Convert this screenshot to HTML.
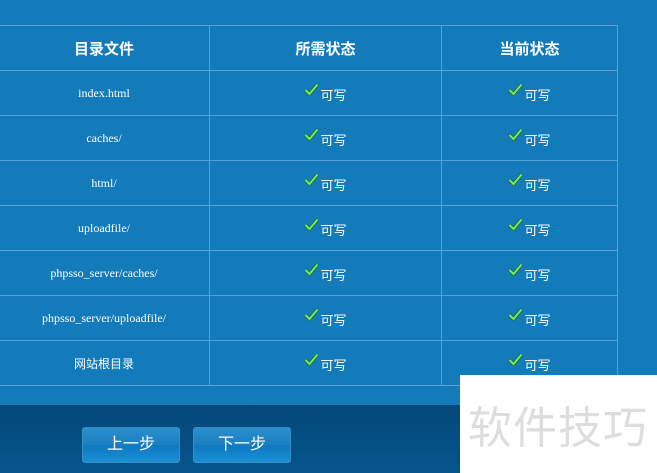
<!DOCTYPE html>
<html><head><meta charset="utf-8"><style>
*{margin:0;padding:0;box-sizing:border-box}
body{width:657px;height:473px;overflow:hidden;background:#147bbb;position:relative;font-family:"Liberation Serif","Noto Sans CJK SC",serif;color:#fff}
table{position:absolute;left:-2px;top:25px;border-collapse:collapse;width:619px;table-layout:fixed}
td{border:1px solid #5aa2d6;height:45px;text-align:center;font-size:12px}
tr.h td{font-size:15px;font-weight:bold;font-family:"Liberation Sans","Noto Sans CJK SC",sans-serif}
td.c{font-family:"Liberation Sans","Noto Sans CJK SC",sans-serif;font-size:13px}
.ck{display:inline-block;vertical-align:4px;margin-right:1px}
.bot{position:absolute;left:0;top:405px;width:657px;height:68px;background:linear-gradient(#04487a,#05558c)}
.btn{position:absolute;top:427px;width:98px;height:36px;border:1px solid #3a8cc4;border-radius:3px;background:linear-gradient(#2a8fcf 0%,#1c7fbf 50%,#0e78c0 52%,#1a90d6 100%);color:#fff;font-size:16px;text-align:center;line-height:34px;font-family:"Liberation Sans","Noto Sans CJK SC",sans-serif}
.wm{position:absolute;left:460px;top:375px;width:197px;height:98px;background:#fff;color:#ddd;font-size:44px;line-height:98px;padding-left:8px;font-family:"Noto Sans CJK SC",sans-serif;letter-spacing:1px}
</style></head><body>
<table>
<colgroup><col style="width:211px"><col style="width:232px"><col style="width:176px"></colgroup>
<tr class="h"><td>目录文件</td><td>所需状态</td><td>当前状态</td></tr>
<tr><td>index.html</td><td class="c"><svg class="ck" width="15" height="13" viewBox="0 0 15 13"><path d="M1.5 7l4 4 8-9.5" stroke="#1e6b1e" stroke-width="3.6" fill="none"/><path d="M1.5 7l4 4 8-9.5" stroke="#72e872" stroke-width="2" fill="none"/></svg>可写</td><td class="c"><svg class="ck" width="15" height="13" viewBox="0 0 15 13"><path d="M1.5 7l4 4 8-9.5" stroke="#1e6b1e" stroke-width="3.6" fill="none"/><path d="M1.5 7l4 4 8-9.5" stroke="#72e872" stroke-width="2" fill="none"/></svg>可写</td></tr>
<tr><td>caches/</td><td class="c"><svg class="ck" width="15" height="13" viewBox="0 0 15 13"><path d="M1.5 7l4 4 8-9.5" stroke="#1e6b1e" stroke-width="3.6" fill="none"/><path d="M1.5 7l4 4 8-9.5" stroke="#72e872" stroke-width="2" fill="none"/></svg>可写</td><td class="c"><svg class="ck" width="15" height="13" viewBox="0 0 15 13"><path d="M1.5 7l4 4 8-9.5" stroke="#1e6b1e" stroke-width="3.6" fill="none"/><path d="M1.5 7l4 4 8-9.5" stroke="#72e872" stroke-width="2" fill="none"/></svg>可写</td></tr>
<tr><td>html/</td><td class="c"><svg class="ck" width="15" height="13" viewBox="0 0 15 13"><path d="M1.5 7l4 4 8-9.5" stroke="#1e6b1e" stroke-width="3.6" fill="none"/><path d="M1.5 7l4 4 8-9.5" stroke="#72e872" stroke-width="2" fill="none"/></svg>可写</td><td class="c"><svg class="ck" width="15" height="13" viewBox="0 0 15 13"><path d="M1.5 7l4 4 8-9.5" stroke="#1e6b1e" stroke-width="3.6" fill="none"/><path d="M1.5 7l4 4 8-9.5" stroke="#72e872" stroke-width="2" fill="none"/></svg>可写</td></tr>
<tr><td>uploadfile/</td><td class="c"><svg class="ck" width="15" height="13" viewBox="0 0 15 13"><path d="M1.5 7l4 4 8-9.5" stroke="#1e6b1e" stroke-width="3.6" fill="none"/><path d="M1.5 7l4 4 8-9.5" stroke="#72e872" stroke-width="2" fill="none"/></svg>可写</td><td class="c"><svg class="ck" width="15" height="13" viewBox="0 0 15 13"><path d="M1.5 7l4 4 8-9.5" stroke="#1e6b1e" stroke-width="3.6" fill="none"/><path d="M1.5 7l4 4 8-9.5" stroke="#72e872" stroke-width="2" fill="none"/></svg>可写</td></tr>
<tr><td>phpsso_server/caches/</td><td class="c"><svg class="ck" width="15" height="13" viewBox="0 0 15 13"><path d="M1.5 7l4 4 8-9.5" stroke="#1e6b1e" stroke-width="3.6" fill="none"/><path d="M1.5 7l4 4 8-9.5" stroke="#72e872" stroke-width="2" fill="none"/></svg>可写</td><td class="c"><svg class="ck" width="15" height="13" viewBox="0 0 15 13"><path d="M1.5 7l4 4 8-9.5" stroke="#1e6b1e" stroke-width="3.6" fill="none"/><path d="M1.5 7l4 4 8-9.5" stroke="#72e872" stroke-width="2" fill="none"/></svg>可写</td></tr>
<tr><td>phpsso_server/uploadfile/</td><td class="c"><svg class="ck" width="15" height="13" viewBox="0 0 15 13"><path d="M1.5 7l4 4 8-9.5" stroke="#1e6b1e" stroke-width="3.6" fill="none"/><path d="M1.5 7l4 4 8-9.5" stroke="#72e872" stroke-width="2" fill="none"/></svg>可写</td><td class="c"><svg class="ck" width="15" height="13" viewBox="0 0 15 13"><path d="M1.5 7l4 4 8-9.5" stroke="#1e6b1e" stroke-width="3.6" fill="none"/><path d="M1.5 7l4 4 8-9.5" stroke="#72e872" stroke-width="2" fill="none"/></svg>可写</td></tr>
<tr><td class="c" style="font-size:12px">网站根目录</td><td class="c"><svg class="ck" width="15" height="13" viewBox="0 0 15 13"><path d="M1.5 7l4 4 8-9.5" stroke="#1e6b1e" stroke-width="3.6" fill="none"/><path d="M1.5 7l4 4 8-9.5" stroke="#72e872" stroke-width="2" fill="none"/></svg>可写</td><td class="c"><svg class="ck" width="15" height="13" viewBox="0 0 15 13"><path d="M1.5 7l4 4 8-9.5" stroke="#1e6b1e" stroke-width="3.6" fill="none"/><path d="M1.5 7l4 4 8-9.5" stroke="#72e872" stroke-width="2" fill="none"/></svg>可写</td></tr>
</table>
<div class="bot"></div>
<div class="btn" style="left:82px">上一步</div>
<div class="btn" style="left:193px">下一步</div>
<div class="wm">软件技巧</div>
</body></html>
